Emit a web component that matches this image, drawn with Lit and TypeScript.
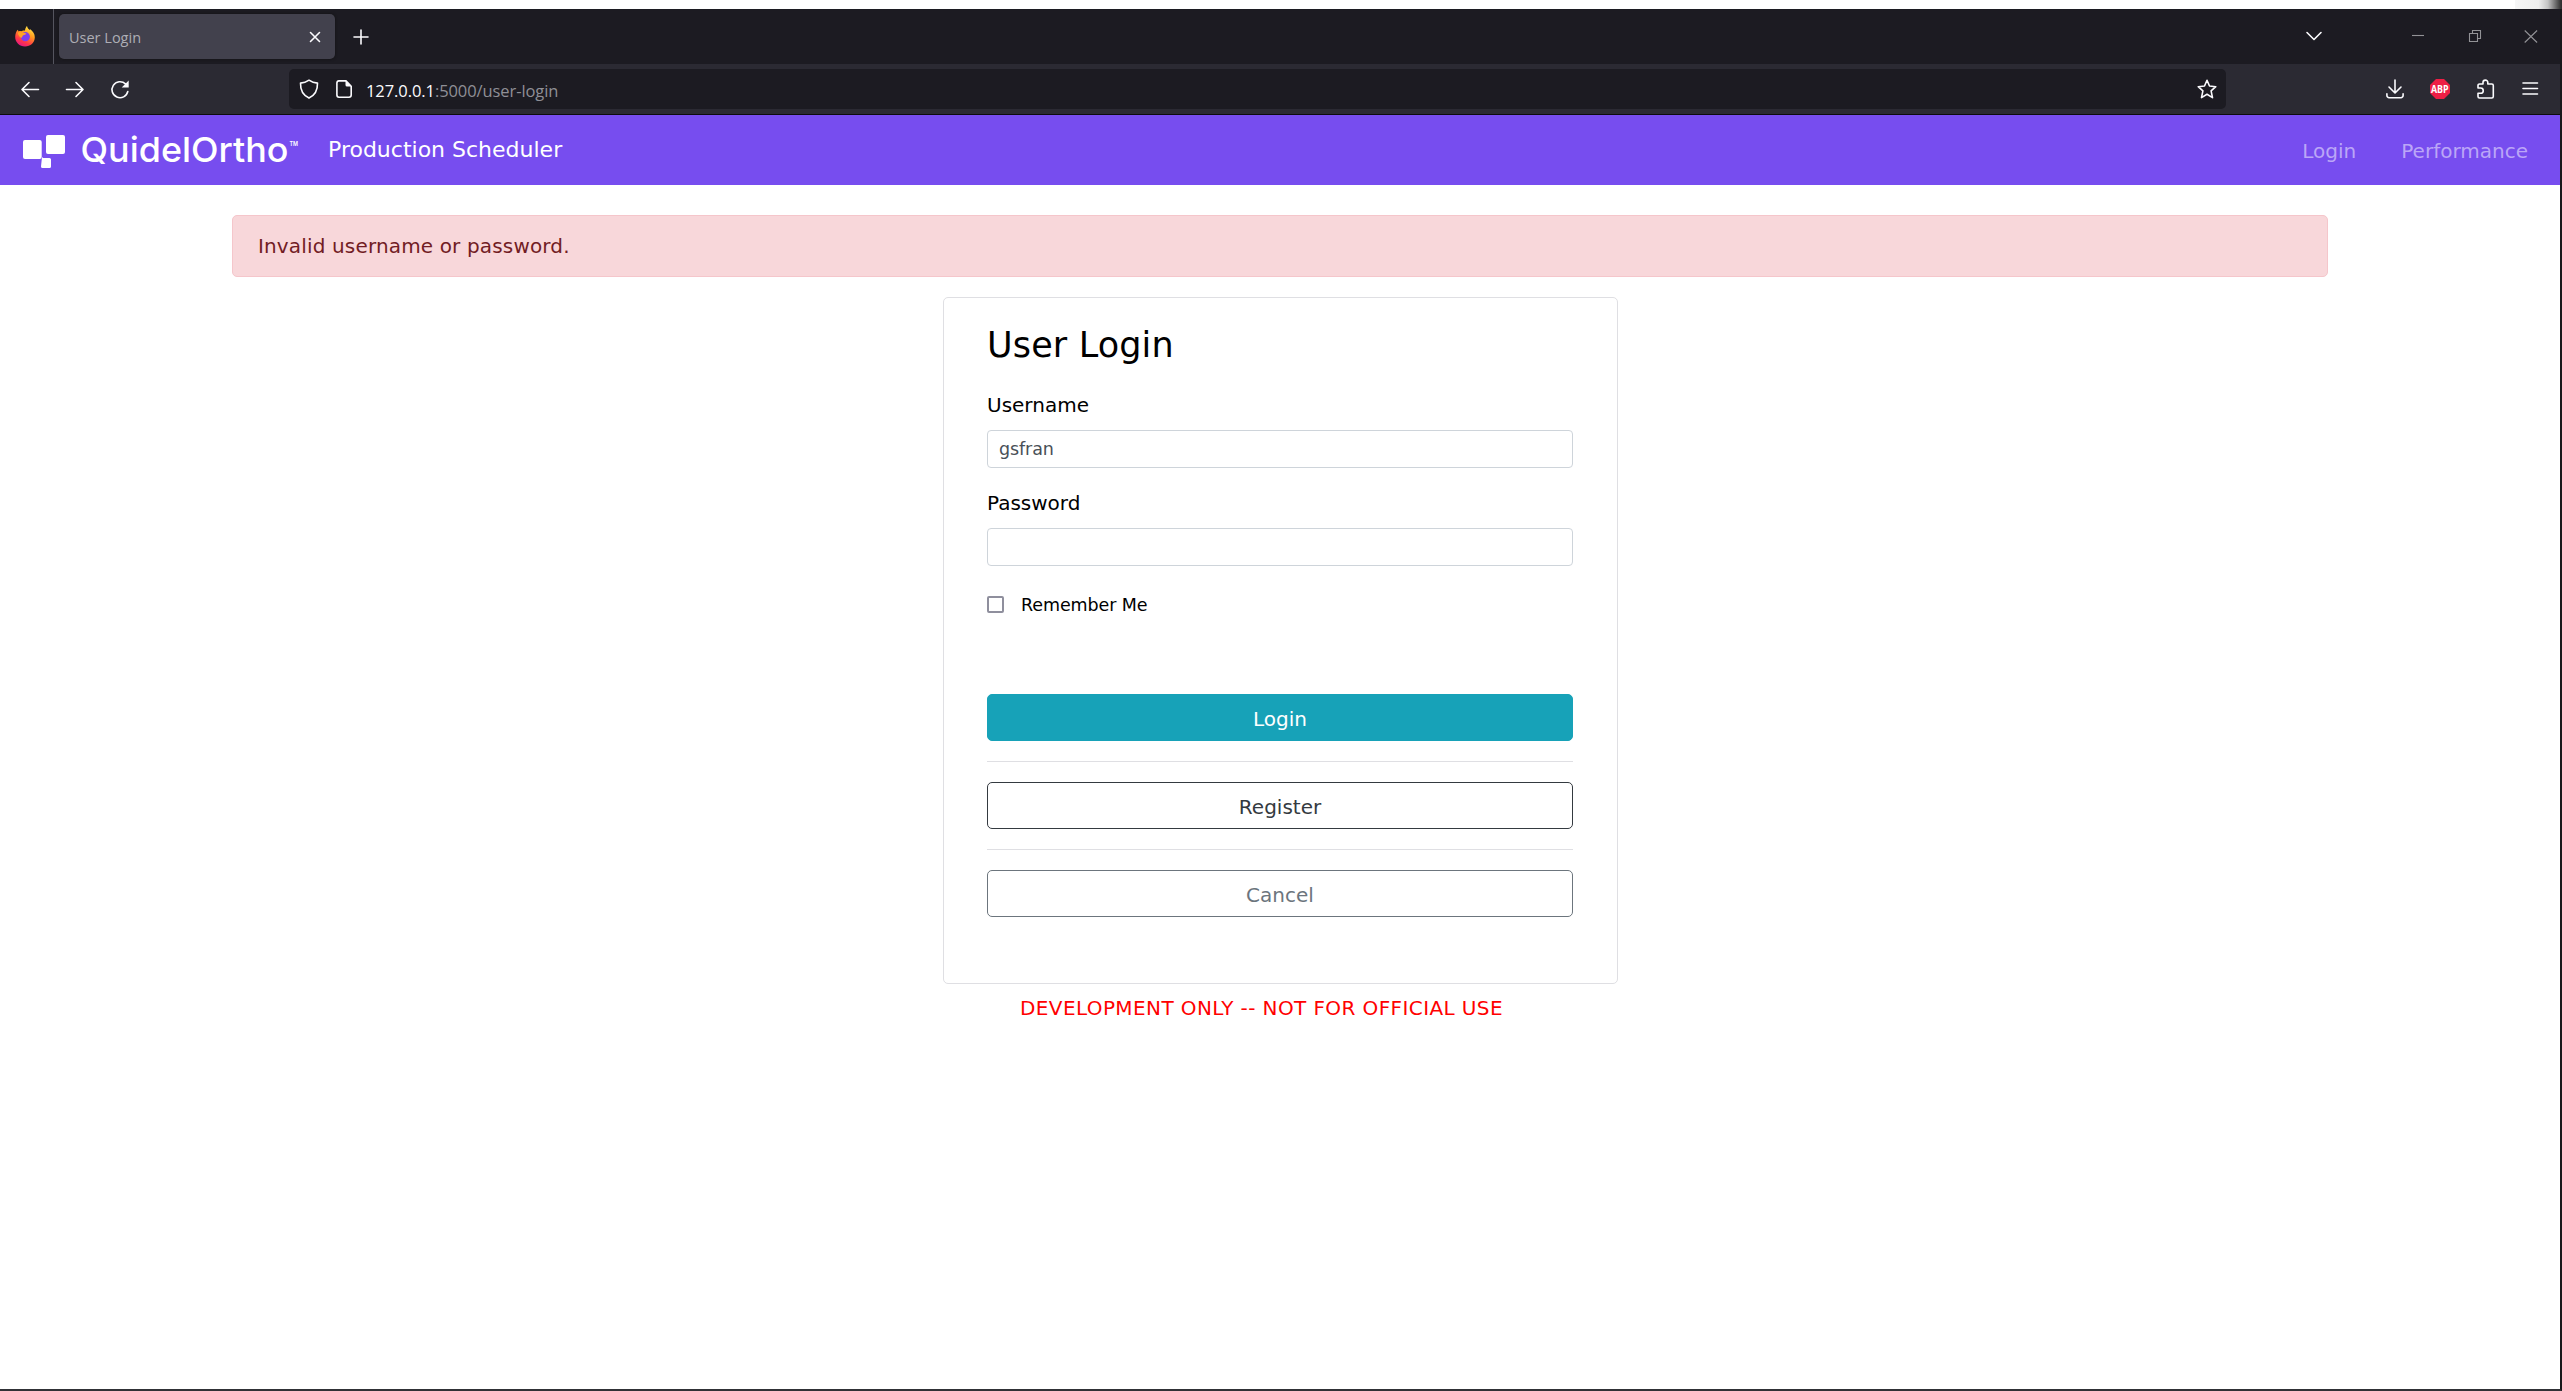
import { LitElement, html, css } from "lit";
import { customElement } from "lit/decorators.js";

@customElement("app-root")
export class AppRoot extends LitElement {
  static styles = css`
    :host { display: block; width: 2562px; height: 1391px; overflow: hidden; box-sizing: border-box; background: #fff; font-family: "DejaVu Sans", Verdana, sans-serif; font-size: 20px; color: #000; }
    * { box-sizing: border-box; }
    .window { display: flex; flex-direction: column; height: 1391px; border-right: 2px solid #18181a; border-bottom: 2px solid #303136; }
    .strip { height: 9px; flex: none; display: flex; justify-content: flex-end; margin-right: -2px; background: #fff; }
    .shade { width: 47px; background: linear-gradient(90deg, #f6f6f6 0%, #eee 50%, #c4c4c4 70%, #303030 98%); }
    .tabs { height: 55px; flex: none; background: #1c1b22; display: flex; align-items: center; }
    .ff { width: 54px; height: 55px; border-right: 1px solid #55555f; display: flex; align-items: center; padding: 0 0 1px 15px; }
    .tab { margin-left: 5px; width: 276px; height: 45px; border-radius: 5px; background: #42414d; box-shadow: 0 0 3px #111; display: flex; align-items: center; justify-content: space-between; padding: 0 14px 0 10px; font: 14.5px "Open Sans", sans-serif; color: #aeaeb5; }
    .tabname { margin-top: 2px; }
    svg { display: block; flex: none; overflow: visible; fill: none; stroke: #fbfbfe; stroke-width: 1.6; stroke-linecap: round; stroke-linejoin: round; }
    .plus { margin-left: 18px; }
    .grow { flex: 1; }
    .wins { display: flex; align-items: center; padding: 0 22px 1px 0; }
    .thin { stroke: #929296; stroke-width: 1.1; stroke-linecap: butt; stroke-linejoin: miter; }
    .min { margin-left: 89px; }
    .restore { margin-left: 45px; }
    .close { margin-left: 43px; }
    .solid { fill: #fbfbfe; stroke: none; }
    .tools { height: 51px; flex: none; background: #2b2a33; border-bottom: 1px solid #0c0c0d; display: flex; align-items: center; }
    .navs { display: flex; gap: 25px; padding-left: 20px; width: 289px; }
    .url { width: 1937px; height: 40px; background: #1c1b22; border-radius: 5px; display: flex; align-items: center; padding: 0 9px 0 10px; font: 16.5px "Open Sans", sans-serif; color: #8f8f96; letter-spacing: -0.08px; }
    .url b { font-weight: 400; color: #fbfbfe; }
    .doc { margin-left: 15px; }
    .addr { margin-left: 12px; margin-top: 2px; }
    .ext { display: flex; gap: 25px; padding-left: 159px; }
    .abp { fill: #ed1e45; stroke: none; }
    .abptext { fill: #fff; stroke: none; font: 700 11px "Open Sans", sans-serif; }
    .bar { height: 70px; flex: none; background: #774def; display: flex; align-items: center; color: #fff; padding-left: 23px; }
    .logo { margin-right: 28px; fill: #fff; stroke: none; }
    .word { font: 500 34.5px Inter, sans-serif; }
    .tm { font: 600 6px Inter, sans-serif; }
    .brand { font-size: 22px; line-height: 30px; margin-top: -1px; }
    .link { color: #bba6f7; line-height: 30px; margin-top: 1px; }
    .perf { margin: 1px 32px 0 45px; }
    .page { flex: 1; display: flex; flex-direction: column; align-items: center; padding-top: 30px; }
    .alert { width: 2096px; height: 62px; line-height: 61px; padding-left: 25px; border: 1px solid #f5c6cb; border-radius: 5px; background: #f8d7da; color: #721c24; letter-spacing: 0.15px; }
    .card { margin: 20px 0 0 1px; width: 675px; height: 687px; border: 1px solid #dfdfe3; border-radius: 5px; padding: 23px 44px 24px 43px; display: flex; flex-direction: column; }
    .title { font-size: 35px; line-height: 48px; margin: 0; font-weight: 400; letter-spacing: 0.15px; }
    .label { line-height: 30px; }
    .user { margin-top: 21px; }
    .field { height: 38px; margin-top: 10px; border: 1px solid #ced4da; border-radius: 4px; padding-left: 11px; font-size: 17.5px; line-height: 37px; color: #495057; letter-spacing: -0.1px; }
    .pass { margin-top: 20px; }
    .check { display: flex; align-items: center; gap: 17px; font-size: 17.5px; height: 30px; margin-top: 23px; letter-spacing: -0.1px; }
    .remember { margin-top: 2px; }
    .box { width: 17px; height: 17px; border: 2px solid #8f8f9d; border-radius: 2px; }
    .btn { height: 47px; line-height: 30px; padding-top: 9px; border: 1px solid; border-radius: 5px; text-align: center; }
    .btn.login { margin-top: 75px; background: #17a2b8; color: #fff; border-color: #17a2b8; }
    .btn.reg { color: #343a40; }
    .btn.cancel { color: #6c757d; }
    .rule { height: 1px; margin: 20px 0; background: #dfdfe3; }
    .dev { color: #f00; line-height: 30px; margin: 9px 37px 0 0; letter-spacing: 0.4px; }
  `;

  render() {
    return html`<div class="window">
      <div class="strip"><div class="shade"></div></div>
      <div class="tabs">
        <div class="ff">${this.firefox()}</div>
        <div class="tab"><span class="tabname">User Login</span>
          <svg width="12" height="12"><path d="M1.500 1.500l9 9M10.500 1.500l-9 9"/></svg></div>
        <svg class="plus" width="16" height="16"><path d="M8 1v14M1 8h14"/></svg>
        <div class="grow"></div>
        <div class="wins">
          <svg width="18" height="10"><path d="M2 1.500l7 7 7-7"/></svg>
          <svg class="thin min" width="12" height="12"><path d="M0 5.500h12"/></svg>
          <svg class="thin restore" width="12" height="12"><path d="M.5 3.500h8v8h-8zM3.500 3.500v-3h8v8h-3"/></svg>
          <svg class="thin close" width="14" height="13"><path d="M.7.5l12.400 12M13.100.5L.7 12.500"/></svg>
        </div>
      </div>
      <div class="tools">
        <div class="navs">
          <svg width="20" height="20"><path d="M9 3.500L2 10.500l7 7M2.300 10.500H18.500"/></svg>
          <svg width="20" height="20"><path d="M11 3.500l7 7-7 7M17.700 10.500H1.500"/></svg>
          <svg width="20" height="20"><path d="M17.800 12.500A8 8 0 1 1 15.500 4.900"/><path class="solid" d="M18.700 1.500v7h-7z"/></svg>
        </div>
        <div class="url">
          <svg width="20" height="20"><path d="M10 1.200C7.500 3 4.700 3.900 1.500 4.100c-.2 7 2.200 12.100 8.500 15 6.300-2.900 8.700-8 8.500-15C15.300 3.900 12.500 3 10 1.200z"/></svg>
          <svg class="doc" width="20" height="20"><path d="M12 1.900H5A2.200 2.200 0 0 0 2.900 4v12A2.200 2.200 0 0 0 5 18.200h10a2.200 2.200 0 0 0 2.200-2.200V7.200z"/><path class="solid" d="M11.500 1.500l6 6h-4.500a1.500 1.500 0 0 1-1.500-1.500z"/></svg>
          <span class="addr"><b>127.0.0.1</b>:5000/user-login</span>
          <div class="grow"></div>
          <svg width="20" height="20"><path d="M10 1.300l2.500 5.700 6.300.7-4.700 4.200 1.400 6.700L10 15.300l-5.500 3.300 1.400-6.700L1.200 7.700l6.300-.7z"/></svg>
        </div>
        <div class="ext">
          <svg width="20" height="20"><path d="M10 1v12.500M4 8l6 6 6-6M1.900 14.800v1.700a2.200 2.200 0 0 0 2.200 2.200h11.800a2.200 2.200 0 0 0 2.200-2.200v-1.700"/></svg>
          <svg width="20" height="20"><path class="abp" d="M6 0h8l6 6v8l-6 6H6l-6-6V6z"/><text class="abptext" x="1" y="14" textLength="17.600" lengthAdjust="spacingAndGlyphs">ABP</text></svg>
          <svg width="20" height="20"><path d="M3 9V6.500A1.500 1.500 0 0 1 4.500 5H8V3.500a2.400 2.400 0 0 1 4.800 0V5h4a1.500 1.500 0 0 1 1.500 1.500v11A1.500 1.500 0 0 1 16.800 19H4.500A1.500 1.500 0 0 1 3 17.500V14.300h2.600a2.600 2.600 0 0 0 0-5.300z"/></svg>
          <svg width="20" height="20"><path d="M3 4h14.500M3 9.500h14.500M3 15h14.500"/></svg>
        </div>
      </div>
      <div class="bar">
        <svg class="logo" width="277" height="44" viewBox="0 0 277 44">
          <rect x="0" y="12" width="18.700" height="19" rx="2"/>
          <rect x="23" y="7" width="19" height="19" rx="2"/>
          <path d="M16 29h3l-1 9.500a1.500 1.500 0 0 0 1.500 1.500h7a1.500 1.500 0 0 0 1.500-1.500V31.500a1.500 1.500 0 0 0-1.500-1.500h-6.500l-1-1z"/>
          <text class="word" x="57.500" y="33.700" textLength="208" lengthAdjust="spacingAndGlyphs">QuidelOrtho</text>
          <text class="tm" x="266.500" y="18" textLength="8.500" lengthAdjust="spacingAndGlyphs">TM</text>
        </svg>
        <span class="brand">Production Scheduler</span>
        <div class="grow"></div>
        <span class="link">Login</span><span class="link perf">Performance</span>
      </div>
      <div class="page">
        <div class="alert">Invalid username or password.</div>
        <div class="card">
          <h1 class="title">User Login</h1>
          <div class="label user">Username</div><div class="field">gsfran</div>
          <div class="label pass">Password</div><div class="field"></div>
          <div class="check"><span class="box"></span><span class="remember">Remember Me</span></div>
          <div class="btn login">Login</div><div class="rule"></div>
          <div class="btn reg">Register</div><div class="rule"></div>
          <div class="btn cancel">Cancel</div>
        </div>
        <div class="dev">DEVELOPMENT ONLY -- NOT FOR OFFICIAL USE</div>
      </div>
    </div>`;
  }

  private firefox() {
    return html`<svg width="20" height="21" viewBox="0 0 20 21">
      <defs>
        <linearGradient id="flame" x1=".8" y1="0" x2=".3" y2="1">
          <stop offset="0" stop-color="#fff44f"/><stop offset=".4" stop-color="#ff9a1f"/>
          <stop offset=".75" stop-color="#ff3647"/><stop offset="1" stop-color="#e31587"/>
        </linearGradient>
      </defs>
      <g stroke="none">
        <path fill="url(#flame)" d="M12 0c.3 2 1.600 3 2.800 4.200.2-.8.100-1.200.1-1.200C18 5 19.800 8 19.800 11.200 19.800 16.500 15.500 20.500 10 20.500S.2 16.300.2 11C.2 8 1.300 5.300 2.800 3.800L3.600 5.500C4.400 5 5.500 5 6.200 5.300 7 4.500 9 4.300 10 4.500 10.200 2.500 11 1 12 0z"/>
        <circle cx="10.300" cy="10.700" r="4.600" fill="#7a3ff0"/>
        <path fill="#ffa226" d="M2.800 6.500c2.500-1 4.500-.6 6.200.2l2.500.8c-.8 1.300-2.300 1.300-3.500 1.900-.9.500-.3 2-1.900 2.400C4.500 11 3 9 2.800 6.500z"/>
      </g>
    </svg>`;
  }
}
